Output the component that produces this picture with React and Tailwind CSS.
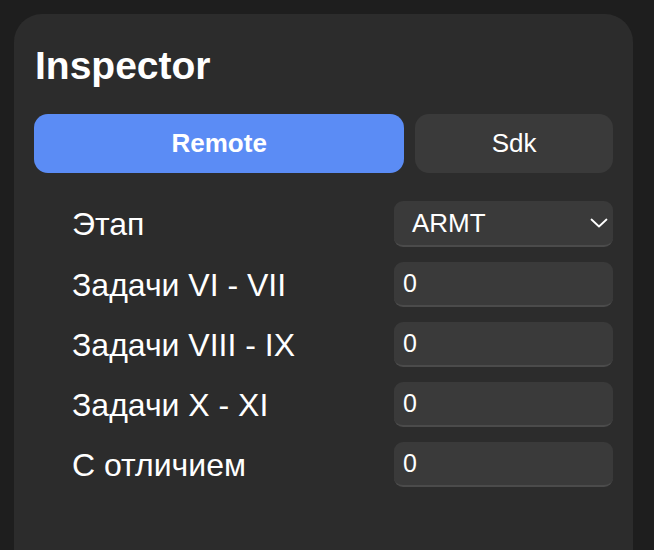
const rows = [
  { label: 'Задачи VI - VII', value: '0' },
  { label: 'Задачи VIII - IX', value: '0' },
  { label: 'Задачи X - XI', value: '0' },
  { label: 'С отличием', value: '0' },
];

const Field = ({ children }) => (
  <div className="w-[219px] h-[45px] rounded-[9px] bg-[#3a3a3a] border-b-2 border-[#4b4b4b] flex items-center pl-[9px] text-[25px] leading-none text-white">
    {children}
  </div>
);

const Chevron = () => (
  <svg width="18" height="10" viewBox="0 0 18 10" fill="none" stroke="white" strokeWidth="1.8" strokeLinecap="round" strokeLinejoin="round">
    <path d="M1.5 1.5 L9 8.5 L16.5 1.5" />
  </svg>
);

export default function App() {
  return (
    <div className="w-[654px] h-[550px] bg-[#1e1e1e] pt-[14px] pl-[14px] overflow-hidden font-['Liberation_Sans',Arial,sans-serif]">
      <div className="w-[619px] h-[560px] bg-[#2c2c2c] rounded-t-[28px] px-[20px] pt-[30px]">
        <h1 className="text-[39px] leading-[44px] font-bold text-white pl-[1px]">Inspector</h1>

        <div className="flex gap-[11px] mt-[26px]">
          <button className="w-[371px] h-[59px] rounded-[14px] bg-[#5b8cf5] text-white text-[26px] font-bold">
            Remote
          </button>
          <button className="w-[198px] h-[59px] rounded-[14px] bg-[#3a3a3a] text-white text-[26px]">
            Sdk
          </button>
        </div>

        <div className="mt-[28px] flex flex-col gap-[15px]">
          <div className="h-[46px] flex items-center justify-between pl-[38px]">
            <span className="text-[32px] leading-none text-white">Этап</span>
            <div className="w-[219px] h-[46px] rounded-[9px] bg-[#3a3a3a] border-b-2 border-[#4b4b4b] flex items-center justify-between pl-[18px] pr-[5px] text-[26px] leading-none text-white">
              <span>ARMT</span>
              <Chevron />
            </div>
          </div>
          {rows.map((r) => (
            <div key={r.label} className="h-[45px] flex items-center justify-between pl-[38px]">
              <span className="text-[32px] leading-none text-white">{r.label}</span>
              <Field>{r.value}</Field>
            </div>
          ))}
        </div>
      </div>
    </div>
  );
}
